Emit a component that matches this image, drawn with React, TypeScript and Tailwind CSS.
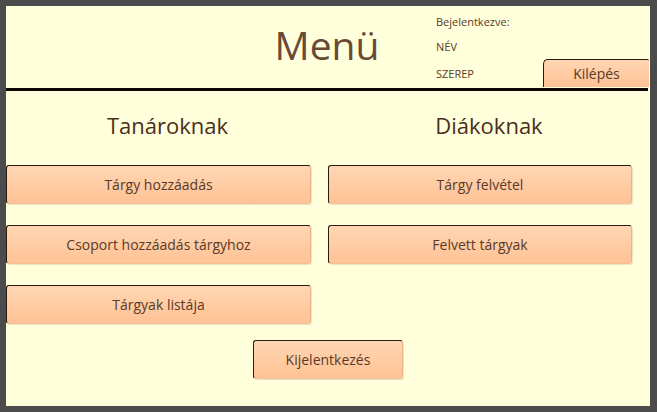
const font = { fontFamily: '"Open Sans", "Noto Sans", sans-serif' };

function MenuButton({ label, className = "" }: { label: string; className?: string }) {
  return (
    <button
      className={
        "flex h-[39px] items-center justify-center rounded-[3px] border-t border-l border-r border-b border-t-[#2b1a0e] border-l-[#2b1a0e] border-r-[#e9b48a] border-b-[#f0c09a] bg-gradient-to-b from-[#ffd6b4] to-[#ffc294] text-[14px] text-[#5a3a28] shadow-[1px_1px_1px_rgba(160,110,70,0.2)] " +
        className
      }
    >
      {label}
    </button>
  );
}

export default function App() {
  return (
    <div className="h-[412px] w-[657px] bg-[#4b4b4b] pt-[6px] pb-[6px] pl-[6px] pr-[7px]" style={font}>
      <div className="flex h-[400px] flex-col bg-[#ffffdc]">
        {/* header */}
        <div className="grid h-[81px] grid-cols-[212px_218px_1fr]">
          <div />
          <div className="flex items-center justify-center pb-[4px]">
            <h1 className="text-[39px] leading-none text-[#6a4a36]">Menü</h1>
          </div>
          <div className="flex">
            <div className="flex w-[107px] flex-col pt-[9px] text-[11px] leading-[13px] text-[#5a3a28]">
              <span>Bejelentkezve:</span>
              <span className="mt-[12px]">NÉV</span>
              <span className="mt-[14px]">SZEREP</span>
            </div>
            <div className="flex flex-1 items-end">
              <button className="mr-[1px] flex h-[28px] w-full items-center justify-center rounded-tl-[5px] rounded-tr-[2px] border-t border-l border-t-[#2b1a0e] border-l-[#2b1a0e] bg-gradient-to-b from-[#ffd6b4] to-[#ffc294] text-[14px] text-[#5a3a28]">
                Kilépés
              </button>
            </div>
          </div>
        </div>
        <div className="mr-[2px] mt-[1px] h-[3px] bg-[#0d0805]" />

        {/* body */}
        <div className="flex gap-[17px] pt-[20px]">
          <div className="flex w-[305px] flex-col">
            <h2 className="h-[28px] pl-[18px] text-center text-[22px] leading-[28px] text-[#4a2e1c]">Tanároknak</h2>
            <div className="mt-[26px] flex flex-col gap-[21px]">
              <MenuButton label="Tárgy hozzáadás" />
              <MenuButton label="Csoport hozzáadás tárgyhoz" />
              <MenuButton label="Tárgyak listája" />
            </div>
          </div>
          <div className="flex w-[304px] flex-col">
            <h2 className="h-[28px] pl-[18px] text-center text-[22px] leading-[28px] text-[#4a2e1c]">Diákoknak</h2>
            <div className="mt-[26px] flex flex-col gap-[21px]">
              <MenuButton label="Tárgy felvétel" />
              <MenuButton label="Felvett tárgyak" />
            </div>
          </div>
        </div>

        <div className="mt-[16px] flex justify-center">
          <MenuButton label="Kijelentkezés" className="w-[150px]" />
        </div>
      </div>
    </div>
  );
}
